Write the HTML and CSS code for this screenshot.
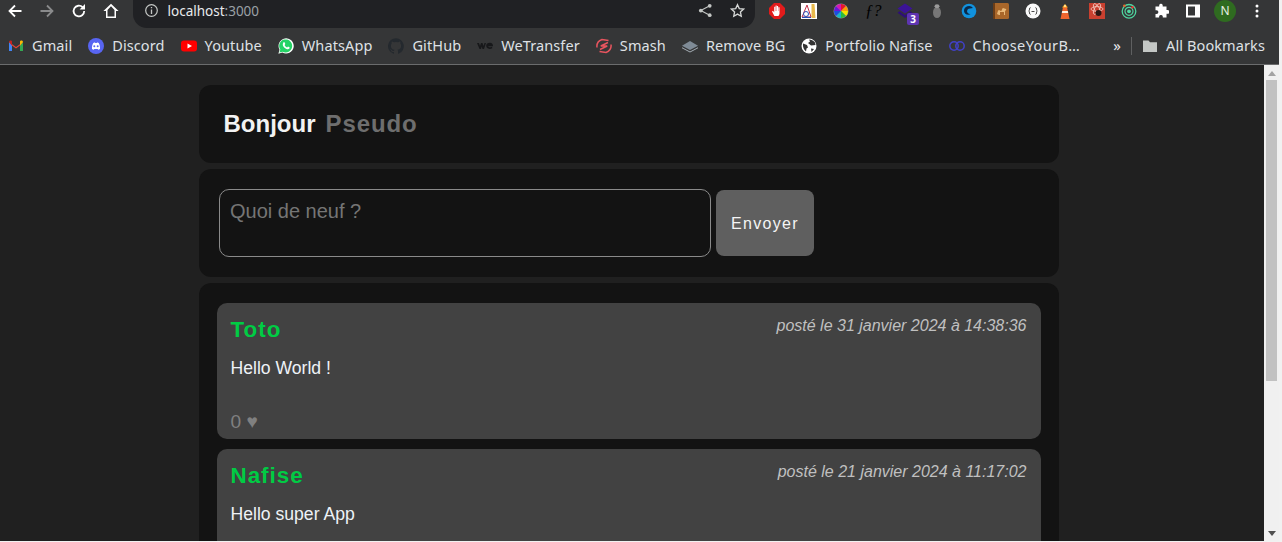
FILE: index.html
```html
<!DOCTYPE html>
<html lang="fr">
<head>
<meta charset="utf-8">
<title>localhost:3000</title>
<link rel="stylesheet" href="styles.css">
</head>
<body>
<div class="window">
  <header class="chrome">
    <div class="toolbar">
      <div class="nav">
        <svg class="nav-icon" viewBox="0 0 16 16"><path d="M14.5 8H2.5M8 2.5 2.5 8 8 13.5" fill="none" stroke="#fff" stroke-width="1.8"/></svg>
        <svg class="nav-icon" viewBox="0 0 16 16"><path d="M1.5 8h12M8 2.500 13.500 8 8 13.500" fill="none" stroke="#8a8b8c" stroke-width="1.8"/></svg>
        <svg class="nav-icon" viewBox="0 0 16 16"><path d="M13.2 8A5.3 5.3 0 1 1 11.6 4.2" fill="none" stroke="#fff" stroke-width="1.8"/><path d="M14 1v5.4H8.6z" fill="#fff"/></svg>
        <svg class="nav-icon home" viewBox="0 0 16 16"><path d="M3 15V8H.4L8 .8 15.600 8H13v7zM4.500 13.500h7V6.900L8 3.300 4.500 6.900z" fill="#fff" fill-rule="evenodd"/></svg>
      </div>
      <div class="omnibox">
        <svg class="info" viewBox="0 0 16 16"><circle cx="8" cy="8" r="6.2" fill="none" stroke="#c4c7c5" stroke-width="1.3"/><path d="M7.3 7h1.4v4.6H7.3zM7.3 4.3h1.4v1.4H7.3z" fill="#c4c7c5"/></svg>
        <span class="url">localhost<span class="port">:3000</span></span>
        <span class="spacer"></span>
        <svg class="omni-icon" viewBox="0 0 16 16"><circle cx="12.500" cy="3" r="2" fill="#c4c7c5"/><circle cx="12.500" cy="13" r="2" fill="#c4c7c5"/><circle cx="3" cy="8" r="2" fill="#c4c7c5"/><path d="M12.500 3 3 8l9.500 5" fill="none" stroke="#c4c7c5" stroke-width="1.200"/></svg>
        <svg class="omni-icon star" viewBox="0 0 16 16"><path d="m8 1.800 1.900 4.200 4.600.5-3.400 3.100.9 4.500L8 11.800l-4 2.300.9-4.500-3.400-3.100 4.600-.5z" fill="none" stroke="#d5d7d6" stroke-width="1.400"/></svg>
      </div>
      <div class="extensions">
        <svg class="ext" viewBox="0 0 16 16"><path d="M5 0h6l5 5v6l-5 5H5l-5-5V5z" fill="#e21b1b"/><path d="M5.400 13 3 8.400l1-.6L5.200 9.400V3.800h1.100V8h.3V2.600h1.100V8h.3V3h1.100v5h.3V4.200h1.100V11l-1 2z" fill="#fff"/></svg>
        <svg class="ext" viewBox="0 0 16 16"><rect width="16" height="16" fill="#fff"/><path d="M10.500 1h3l1 14h-4z" fill="#e8b94a"/><path d="M6 2 1 14h9z" fill="none" stroke="#c2344a" stroke-width="1"/><path d="M1 14h9v1H1z" fill="#2b4fb5"/><circle cx="5" cy="11" r="2.500" fill="none" stroke="#2b4fb5"/></svg>
        <svg class="ext" viewBox="0 0 16 16"><circle cx="8" cy="8" r="7.500" fill="#8d8d8d"/><path d="M8 8V1a7 7 0 0 1 5 2z" fill="#e6172d"/><path d="M8 8l5-5a7 7 0 0 1 2 5z" fill="#ff9d00"/><path d="M8 8h7a7 7 0 0 1-2 5z" fill="#f4e500"/><path d="M8 8l5 5a7 7 0 0 1-5 2z" fill="#2fbd3a"/><path d="M8 8v7a7 7 0 0 1-5-2z" fill="#19b6c9"/><path d="M8 8l-5 5a7 7 0 0 1-2-5z" fill="#1b4fe0"/><path d="M8 8H1a7 7 0 0 1 2-5z" fill="#6a19d8"/><path d="M8 8 3 3a7 7 0 0 1 5-2z" fill="#d815b5"/></svg>
        <span class="ext ext-f">ƒ?</span>
        <span class="ext ext-badge-wrap">
          <svg class="ext" viewBox="0 0 16 16"><path d="M8 .5 15.500 5.500 8 10.500 .5 5.500z" fill="#3b1396"/><path d="M2.500 8.300.5 9.700 8 15l7.500-5.300-2-1.400L8 12.100z" fill="#2e0f78"/></svg>
          <span class="badge">3</span>
        </span>
        <svg class="ext" viewBox="0 0 16 16"><ellipse cx="8" cy="9.500" rx="4" ry="5.500" fill="#777"/><ellipse cx="8" cy="3.200" rx="2.500" ry="2" fill="#9a9a9a"/></svg>
        <svg class="ext" viewBox="0 0 16 16"><circle cx="8" cy="8" r="7.300" fill="#1192de"/><path d="M3 8a5 5 0 0 1 9-3l-3 .6A3 3 0 0 0 6 8c0 2 2 3.500 4 2.800-2.500 2-7 .6-7-2.800z" fill="#0a2a4a"/></svg>
        <svg class="ext" viewBox="0 0 16 16"><rect width="16" height="16" rx="1.500" fill="#a9672a"/><rect width="2" height="16" fill="#6b3d17"/><path d="M4 11c1-3 1-4 2-4s1 1 2 1 1-3 2-3 2 1 3 1-1 2-1 3v3h-1V9H7v3H6z" fill="#e8b877"/></svg>
        <svg class="ext" viewBox="0 0 16 16"><circle cx="8" cy="8" r="7.500" fill="#fafafa"/><path d="M5.500 4.500C4 4.500 5 7.500 3.700 8 5 8.500 4 11.500 5.500 11.500M10.500 4.500c1.500 0 .5 3 1.800 3.500-1.300.5-.3 3.500-1.800 3.500M6.500 8.500h3" fill="none" stroke="#333" stroke-width=".9"/></svg>
        <svg class="ext" viewBox="0 0 16 16"><path d="M6 4h4l2.500 12h-9z" fill="#f0662e"/><path d="M5.200 8h5.600l.4 2H4.800z" fill="#fff2e0"/><path d="M5 4.500 8 1l3 3.500z" fill="#f9a11b"/><circle cx="8" cy="3" r="1.200" fill="#ffe08a"/></svg>
        <svg class="ext" viewBox="0 0 16 16"><rect width="16" height="16" fill="#c9402f"/><g fill="none" stroke="#f4c9c0" stroke-width=".8"><ellipse cx="8" cy="6" rx="6" ry="2.400"/><ellipse cx="8" cy="6" rx="6" ry="2.400" transform="rotate(60 8 6)"/><ellipse cx="8" cy="6" rx="6" ry="2.400" transform="rotate(120 8 6)"/></g><circle cx="9.500" cy="10" r="3" fill="#2a1714"/></svg>
        <svg class="ext" viewBox="0 0 16 16"><circle cx="8" cy="8.300" r="6.800" fill="none" stroke="#4fd6a0" stroke-width="1.300"/><circle cx="8" cy="8.300" r="4" fill="none" stroke="#4fd6a0" stroke-width="1.200"/><circle cx="8" cy="8.300" r="1.900" fill="#4fd6a0"/><circle cx="3.400" cy="2.800" r="1.300" fill="#e8672c"/><circle cx="11.500" cy="4.300" r="1.200" fill="#e33"/></svg>
        <svg class="ext" viewBox="0 0 16 16"><path d="M6.200 2.200a1.800 1.800 0 0 1 3.500 0V3.500H13.500V7h1a1.900 1.900 0 0 1 0 3.800h-1v3.700H9.800v-1a1.900 1.900 0 0 0-3.700 0v1H2.500V11h1a1.900 1.900 0 0 0 0-3.800h-1V3.500h3.700z" fill="#fff"/></svg>
        <svg class="ext" viewBox="0 0 16 16"><path d="M1 1.500h14v13H1zM3 3.500v9h7v-9z" fill="#fff" fill-rule="evenodd"/></svg>
        <span class="avatar">N</span>
        <svg class="ext kebab" viewBox="0 0 16 16"><circle cx="8" cy="3" r="1.500" fill="#fff"/><circle cx="8" cy="8" r="1.500" fill="#fff"/><circle cx="8" cy="13" r="1.500" fill="#fff"/></svg>
      </div>
    </div>
    <nav class="bookmarks">
      <a class="bm"><svg viewBox="0 0 16 16"><path d="M1 13V4l7 5 7-5v9h-3V7.500L8 10.500 4 7.500V13z" fill="#ea4335"/><path d="M1 13h3V7.500L1 4z" fill="#4285f4"/><path d="M12 13h3V4l-3 3.500z" fill="#34a853"/><path d="M1 4c0-1.500 1.600-2 2.500-1.300L4 3.200 4 7.500z" fill="#c5221f"/><path d="M12 3.200l.5-.5C13.400 2 15 2.500 15 4l-3 3.500z" fill="#fbbc04"/></svg>Gmail</a>
      <a class="bm"><svg viewBox="0 0 16 16"><circle cx="8" cy="8" r="8" fill="#5865f2"/><path d="M4 11c-.2-2.500.3-4.500 1.300-6 1-.4 1.500-.5 1.700-.4l.3.5h1.400l.3-.5c.3 0 1 .1 1.700.4 1 1.500 1.500 3.500 1.300 6-.6.500-1.300.7-1.800.8l-.5-.8H6.300l-.5.8C5.300 11.700 4.600 11.500 4 11z" fill="#fff"/><circle cx="6.300" cy="8.300" r="1" fill="#5865f2"/><circle cx="9.700" cy="8.300" r="1" fill="#5865f2"/></svg>Discord</a>
      <a class="bm"><svg viewBox="0 0 16 16"><rect y="2.500" width="16" height="11" rx="3" fill="#f00"/><path d="M6.500 5.500v5L11 8z" fill="#fff"/></svg>Youtube</a>
      <a class="bm"><svg viewBox="0 0 16 16"><path d="M.4 15.700l1.100-4A7.600 7.600 0 1 1 4.400 14.600z" fill="#fff"/><path d="M1.500 14.500l.8-2.900A6.500 6.500 0 1 1 4.700 13.700z" fill="#25d366"/><path d="M5.600 4.200c.5-.3 1 0 1.200.5l.5 1.300-.7.9c.4 1 1.300 1.900 2.500 2.500l.9-.8 1.400.7c.4.200.3.900 0 1.300-.7.800-1.700.9-3 .3-1.700-.7-3-2-3.500-3.500-.3-1.100 0-2.200.7-3.200z" fill="#fff"/></svg>WhatsApp</a>
      <a class="bm"><svg viewBox="0 0 16 16"><path d="M8 .2a8 8 0 0 0-2.500 15.600c.4.100.5-.2.500-.4v-1.400c-2.200.5-2.700-1-2.700-1-.4-.9-.9-1.200-.9-1.200-.7-.5.100-.5.100-.5.800.1 1.200.8 1.200.8.700 1.200 1.900.9 2.300.7.100-.5.300-.9.500-1.100-1.800-.2-3.600-.9-3.600-4 0-.9.300-1.600.8-2.100-.1-.2-.4-1 .1-2.100 0 0 .7-.2 2.200.8a7.600 7.600 0 0 1 4 0c1.500-1 2.200-.8 2.200-.8.400 1.100.200 1.900.1 2.100.5.600.8 1.300.8 2.100 0 3.100-1.900 3.700-3.700 3.900.3.300.6.800.6 1.500v2.200c0 .2.100.5.600.4A8 8 0 0 0 8 .2z" fill="#24292e"/></svg>GitHub</a>
      <a class="bm"><svg viewBox="0 0 16 16"><path d="M0 5h2l1 3 1-3h1.500l1 3 1-3H9L7 11H5.500L4.700 8.500 4 11H2.500z" fill="#17181a"/><path d="M13 4.800c2 0 3 1.300 3 3.400H11.200c.2.800.9 1 1.600 1 .6 0 1.100-.1 1.700-.5l1 1.200c-.8.700-1.700 1-2.900 1-2 0-3.400-1.300-3.400-3.100 0-1.800 1.400-3 3.800-3z" fill="#17181a"/></svg>WeTransfer</a>
      <a class="bm"><svg viewBox="0 0 16 16"><path d="M12.500 2.500 6 1.500C2 3 .5 6 1 9.500M3.500 13.500l6.500 1c4-1.500 5.500-4.500 5-8" fill="none" stroke="#e8555f" stroke-width="1.500"/><path d="M12 4.500 4.800 8h6.400L4 11.500" fill="none" stroke="#e8555f" stroke-width="1.500"/></svg>Smash</a>
      <a class="bm"><svg viewBox="0 0 16 16"><path d="M8 3 16 7.800 8 12 0 7.800z" fill="#7f8b96"/><path d="M0 9.200 8 13.500l8-4.300v1L8 14.500 0 10.200z" fill="#a6aeb6"/></svg>Remove BG</a>
      <a class="bm"><svg viewBox="0 0 16 16"><circle cx="8" cy="8" r="7.500" fill="#fff"/><path d="M2 5.500 6 7l1 2.500-1.500 1-.5 3C3 12 1.500 9 2 5.500zM8 1.500l1 2-2 1.500 3 2.500 4.500-.5-.5-2.500C12.500 2.500 10 1.500 8 1.500zM10 10.500l3 .5L10.500 14z" fill="#333"/></svg>Portfolio Nafise</a>
      <a class="bm"><svg viewBox="0 0 16 16"><circle cx="5" cy="8" r="4.200" fill="none" stroke="#4141c8" stroke-width="1.500"/><circle cx="11" cy="8" r="4.200" fill="none" stroke="#4141c8" stroke-width="1.500"/></svg><span class="bm-clip">ChooseYourB…</span></a>
      <span class="spacer"></span>
      <span class="more">»</span>
      <span class="divider"></span>
      <a class="bm all"><svg viewBox="0 0 16 16"><path d="M1 2.500h5.500L8 4.200h7V14H1z" fill="#c4c7c5"/></svg>All Bookmarks</a>
    </nav>
  </header>
  <div class="viewport">
    <main class="page">
      <section class="panel greeting">
        <h1 class="hello">Bonjour</h1>
        <span class="pseudo">Pseudo</span>
      </section>
      <section class="panel composer">
        <textarea class="message" placeholder="Quoi de neuf ?"></textarea>
        <button class="send">Envoyer</button>
      </section>
      <section class="panel feed">
        <article class="post">
          <div class="post-head"><h2 class="author">Toto</h2><span class="date">posté le 31 janvier 2024 à 14:38:36</span></div>
          <p class="body">Hello World !</p>
          <div class="likes">0 ♥</div>
        </article>
        <article class="post">
          <div class="post-head"><h2 class="author">Nafise</h2><span class="date">posté le 21 janvier 2024 à 11:17:02</span></div>
          <p class="body">Hello super App</p>
        </article>
      </section>
    </main>
    <div class="scrollbar">
      <span class="arrow"></span>
      <span class="thumb"></span>
      <span class="arrow-down"></span>
    </div>
  </div>
</div>
</body>
</html>
```
FILE: styles.css
```css
* { box-sizing: border-box; }
html, body { margin: 0; height: 100%; overflow: hidden; background: #f1f1f1; }
.window { width: 1279px; height: 541px; display: flex; flex-direction: column; overflow: hidden; }

.chrome { height: 65px; flex: none; background: #353637; border-bottom: 1px solid #6b6c6d; font-family: "Noto Sans", sans-serif; }
.toolbar { height: 28px; display: flex; align-items: flex-start; }
.nav { width: 133px; height: 22px; display: flex; align-items: center; gap: 16px; padding-left: 7px; flex: none; }
.nav-icon { width: 16px; height: 16px; flex: none; }
.omnibox { width: 622px; height: 28px; background: #202124; border-radius: 0 0 14px 14px; display: flex; align-items: flex-start; padding: 3px 10px 0 11px; flex: none; }
.info { width: 15px; height: 15px; flex: none; }
.url { margin-left: 8.500px; font-size: 13.500px; line-height: 16px; color: #e8eaed; }
.port { color: #9aa0a6; }
.spacer { flex: 1; }
.omni-icon { width: 15px; height: 15px; margin-left: 17px; flex: none; }
.extensions { flex: 1; height: 22px; display: flex; align-items: center; gap: 16px; padding-left: 14px; }
.ext { width: 16px; height: 16px; flex: none; display: block; }
.ext-f { font-family: "Liberation Serif", serif; font-style: italic; font-size: 16.500px; line-height: 16px; color: #000; white-space: nowrap; }
.ext-badge-wrap { position: relative; }
.badge { position: absolute; left: 10px; top: 10px; width: 12px; height: 12px; background: #5e35b1; border-radius: 2px; color: #fff; font-size: 10px; font-weight: 700; line-height: 12px; text-align: center; }
.avatar { width: 22px; height: 22px; border-radius: 50%; background: #2f6b20; color: #e6efe2; font-size: 12px; line-height: 22px; text-align: center; flex: none; margin-left: -3px; }
.kebab { margin-left: -3px; }

.bookmarks { height: 34px; display: flex; align-items: center; padding: 0 14px 0 8px; gap: 16px; color: #dfe1e5; font-size: 14.500px; letter-spacing: .1px; }
.bm { display: flex; align-items: center; gap: 8px; white-space: nowrap; }
.bm svg { width: 16px; height: 16px; flex: none; margin-top: 2px; }
.bm-clip { letter-spacing: .4px; }
.more { color: #e8eaed; font-size: 15px; }
.divider { width: 1px; height: 18px; background: #5f6061; margin: 2px -6px 0; }

.viewport { flex: 1; min-height: 0; display: flex; background: #202020; }
.page { flex: 1; min-width: 0; height: 476px; overflow: hidden; padding: 20px 0 0 199px; font-family: "Liberation Sans", Arial, sans-serif; }
.panel { width: 860px; background: #131313; border-radius: 12px; margin-bottom: 6px; }
.greeting { height: 78px; display: flex; align-items: center; padding-left: 24.500px; gap: 10px; }
.hello { margin: 0; font-size: 24px; font-weight: 700; color: #f2f2f2; }
.pseudo { font-size: 24px; font-weight: 700; letter-spacing: .9px; color: #6e6e6e; }
.composer { height: 108px; display: flex; align-items: center; padding-left: 20px; gap: 5px; }
.message { width: 492px; height: 68px; resize: none; background: #131313; border: 1px solid #8a8a8a; border-radius: 10px; padding: 10px; font: 20px "Liberation Sans", Arial, sans-serif; color: #eee; outline: none; }
.message::placeholder { color: #757575; opacity: 1; }
.send { width: 98px; height: 66px; border: 0; border-radius: 8px; padding: 2px 0 0; background: #5f5f5f; color: #f5f5f5; font: 16px "Liberation Sans", Arial, sans-serif; letter-spacing: 1.300px; }
.feed { padding: 20px 18px 0 18px; height: 400px; }
.post { background: #424242; border-radius: 10px; padding: 14px 14.500px 0 13.500px; height: 136px; margin-bottom: 10px; overflow: hidden; }
.post-head { display: flex; justify-content: space-between; align-items: flex-start; }
.author { margin: 0; font-size: 22.400px; line-height: 26px; font-weight: 700; letter-spacing: 1px; color: #00cc44; }
.date { font-size: 16px; font-style: italic; line-height: 18px; color: #c0c0c0; }
.body { margin: 14px 0 0; font-size: 17.600px; line-height: 22px; color: #eef2f7; }
.likes { margin-top: 31px; font-size: 19.200px; line-height: 24px; color: #808080; }

.scrollbar { width: 15px; flex: none; background: #f0f0f0; display: flex; flex-direction: column; align-items: center; }
.arrow { margin-top: 6px; width: 0; height: 0; border-left: 4px solid transparent; border-right: 4px solid transparent; border-bottom: 5px solid #a3a3a3; }
.thumb { margin-top: 4px; width: 11px; height: 301px; background: #c1c1c1; }
.arrow-down { margin-top: auto; margin-bottom: 5px; width: 0; height: 0; border-left: 4px solid transparent; border-right: 4px solid transparent; border-top: 5px solid #505050; }
```
